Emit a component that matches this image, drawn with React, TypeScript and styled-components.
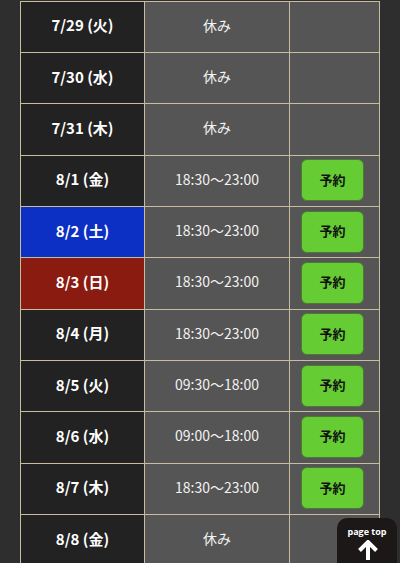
import React from "react";
import styled, { createGlobalStyle } from "styled-components";

const Global = createGlobalStyle`
  html, body { margin: 0; padding: 0; background: #2e2e2e; }
  body { font-family: "Noto Sans CJK JP", "Noto Sans", sans-serif; overflow: hidden; }
`;

const Page = styled.div`
  width: 400px;
  height: 563px;
  background: #2e2e2e;
  padding: 0 20px 0 20px;
  box-sizing: border-box;
  position: relative;
  overflow: hidden;
`;

const Table = styled.div`
  margin-top: 0.67px;
  width: 360px;
  border-left: 1px solid #c9bd9f;
  box-sizing: border-box;
  border-top: 1px solid #c9bd9f;
`;

const Row = styled.div`
  display: grid;
  grid-template-columns: 124px 145px 90px;
  height: 51.33px;
  box-sizing: border-box;
  border-bottom: 1px solid #c9bd9f;
`;

type Tone = "normal" | "sat" | "sun";

const DateCell = styled.div<{ $tone: Tone }>`
  display: flex;
  align-items: center;
  justify-content: center;
  padding-bottom: 4px;
  border-right: 1px solid #c9bd9f;
  background: ${(p) =>
    p.$tone === "sat" ? "#0d30c4" : p.$tone === "sun" ? "#8a1b11" : "#222222"};
  color: #ffffff;
  font-weight: 700;
  font-size: 15px;
`;

const TimeCell = styled.div`
  display: flex;
  align-items: center;
  justify-content: center;
  padding-bottom: 4px;
  border-right: 1px solid #c9bd9f;
  background: #555555;
  color: #f2f2f2;
  font-size: 14px;
`;

const ActionCell = styled.div`
  display: flex;
  align-items: center;
  justify-content: center;
  padding-bottom: 1px;
  border-right: 1px solid #c9bd9f;
  background: #555555;
`;

const Reserve = styled.button`
  width: 63px;
  height: 42px;
  border: 1px solid #4c7a33;
  border-radius: 6px;
  background: #66cc33;
  color: #111;
  font-family: "Noto Sans CJK JP", sans-serif;
  font-weight: 700;
  font-size: 13px;
  padding: 0 0 2px 0;
  margin-right: 4px;
  cursor: pointer;
`;

const PageTop = styled.div`
  position: absolute;
  left: 337px;
  top: 518px;
  width: 60px;
  height: 60px;
  border-radius: 10px;
  background: #1d1818;
  display: flex;
  flex-direction: column;
  align-items: center;
  box-sizing: border-box;
  color: #fff;
`;

const PageTopLabel = styled.span`
  font-family: "Open Sans", "Noto Sans", sans-serif;
  font-weight: 700;
  font-size: 9px;
  line-height: 1;
  margin-top: 9px;
`;

const ArrowWrap = styled.div`
  margin-top: 4px;
  margin-left: 1px;
`;

type Day = { date: string; tone: Tone; time: string; open: boolean };

const days: Day[] = [
  { date: "7/29 (火)", tone: "normal", time: "休み", open: false },
  { date: "7/30 (水)", tone: "normal", time: "休み", open: false },
  { date: "7/31 (木)", tone: "normal", time: "休み", open: false },
  { date: "8/1 (金)", tone: "normal", time: "18:30〜23:00", open: true },
  { date: "8/2 (土)", tone: "sat", time: "18:30〜23:00", open: true },
  { date: "8/3 (日)", tone: "sun", time: "18:30〜23:00", open: true },
  { date: "8/4 (月)", tone: "normal", time: "18:30〜23:00", open: true },
  { date: "8/5 (火)", tone: "normal", time: "09:30〜18:00", open: true },
  { date: "8/6 (水)", tone: "normal", time: "09:00〜18:00", open: true },
  { date: "8/7 (木)", tone: "normal", time: "18:30〜23:00", open: true },
  { date: "8/8 (金)", tone: "normal", time: "休み", open: false },
];

export default function App() {
  return (
    <>
      <Global />
      <Page>
        <Table>
          {days.map((d) => (
            <Row key={d.date}>
              <DateCell $tone={d.tone}>{d.date}</DateCell>
              <TimeCell>{d.time}</TimeCell>
              <ActionCell>{d.open && <Reserve>予約</Reserve>}</ActionCell>
            </Row>
          ))}
        </Table>
        <PageTop>
          <PageTopLabel>page top</PageTopLabel>
          <ArrowWrap>
            <svg width="22" height="20" viewBox="0 0 22 20">
              <path
                d="M11 2 L11 20 M2.5 10.5 L11 2 L19.5 10.5"
                stroke="#fff"
                strokeWidth="4"
                fill="none"
                strokeLinecap="butt"
                strokeLinejoin="miter"
              />
            </svg>
          </ArrowWrap>
        </PageTop>
      </Page>
    </>
  );
}
